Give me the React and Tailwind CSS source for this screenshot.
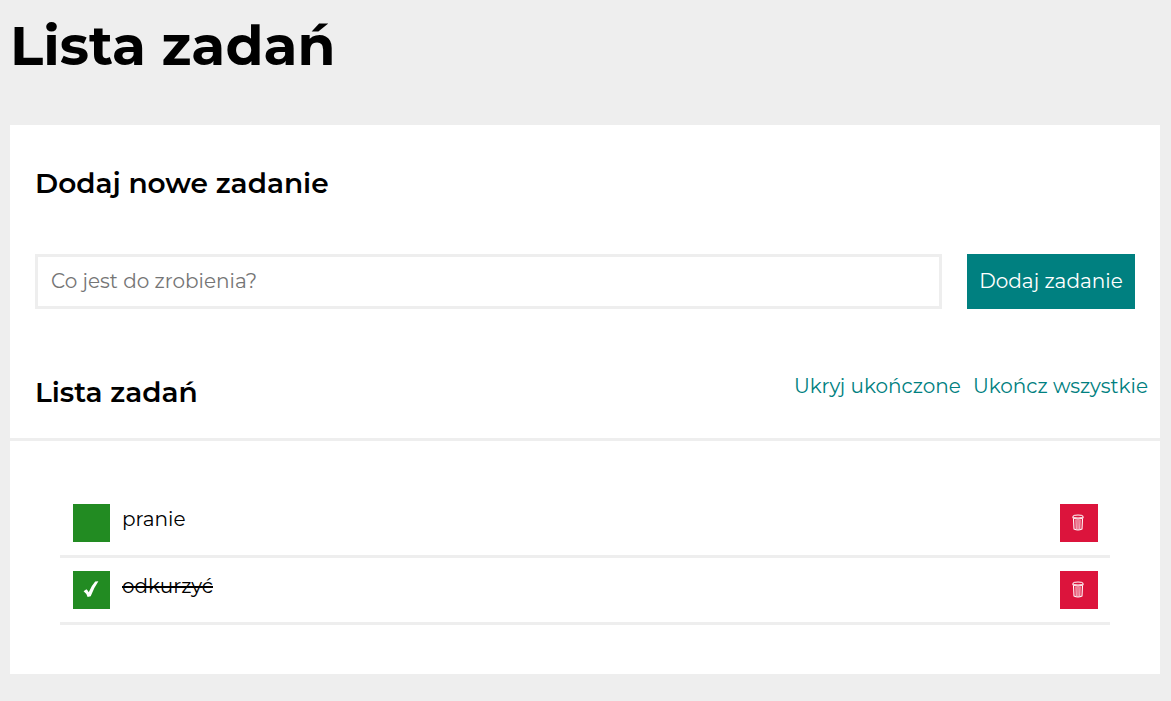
import { useState } from "react";

function TrashIcon() {
  return (
    <svg viewBox="0 0 12 17" className="h-[17px] w-3" fill="none" stroke="#fff" aria-hidden="true">
      <ellipse cx="6" cy="2.500" rx="5.200" ry="1.500" strokeWidth="1" />
      <path d="M0.900 2.500V4.200Q6 5.800 11.100 4.200V2.500" strokeWidth="0.9" />
      <path d="M1.500 4.600 2 15Q6 17 10 15L10.500 4.600" strokeWidth="1.1" />
      <path d="M4 5.500 4.200 15.300M6 5.500V15.800M8 5.500 7.800 15.300" strokeWidth="0.9" />
    </svg>
  );
}

function CheckIcon() {
  return (
    <svg viewBox="0 0 16 18" className="h-[18px] w-4" fill="#fff" aria-hidden="true">
      <path d="M0.600 11.200 3.400 9.200Q4.800 10.200 5.700 12.200Q8.600 5.600 12.200 1.600L15.400 1.200Q10.800 7.800 7.700 16.200L4.600 17Q3.300 13 0.600 11.200Z" />
    </svg>
  );
}

export default function App() {
  const [tasks, setTasks] = useState([
    { id: 1, name: "pranie", done: false },
    { id: 2, name: "odkurzyć", done: true },
  ]);
  const [text, setText] = useState("");
  const [hideDone, setHideDone] = useState(false);

  const addTask = (event) => {
    event.preventDefault();
    if (!text.trim()) return;
    setTasks([...tasks, { id: Date.now(), name: text.trim(), done: false }]);
    setText("");
  };
  const toggle = (id) => setTasks(tasks.map((t) => (t.id === id ? { ...t, done: !t.done } : t)));

  return (
    <div className="min-h-screen bg-[#eeeeee] pr-[11px] pb-[26px] pl-[10px] font-['Montserrat','Inter',sans-serif] text-[20px] leading-6 text-black">
      <h1 className="pt-3 text-[55px] leading-[68px] font-bold">Lista zadań</h1>
      <main className="mt-[45px] bg-white">
        <section className="px-[25px] pt-[42px]">
          <h2 className="text-[28px] leading-8 font-semibold">Dodaj nowe zadanie</h2>
          <form onSubmit={addTask} className="mt-[55px] flex gap-[25px]">
            <input
              aria-label="Nowe zadanie"
              placeholder="Co jest do zrobienia?"
              value={text}
              onChange={(event) => setText(event.target.value)}
              className="h-[55px] min-w-0 flex-1 border-3 border-[#eeeeee] px-[13px] pb-[2px] outline-none placeholder:text-[#757575]"
            />
            <button className="h-[55px] w-[168px] bg-[#008080] pb-[2px] text-white">Dodaj zadanie</button>
          </form>
        </section>
        <section className="mt-[67px]">
          <header className="flex items-start justify-between border-b-3 border-[#eeeeee] pr-3 pb-[30px] pl-[25px]">
            <h2 className="text-[28px] leading-8 font-semibold">Lista zadań</h2>
            <div className="flex gap-3 leading-5 text-[#008080]">
              <button type="button" onClick={() => setHideDone(!hideDone)}>
                {hideDone ? "Pokaż ukończone" : "Ukryj ukończone"}
              </button>
              <button type="button" onClick={() => setTasks(tasks.map((t) => ({ ...t, done: true })))}>
                Ukończ wszystkie
              </button>
            </div>
          </header>
          <ul className="px-[50px] pt-[50px] pb-[49px]">
            {tasks
              .filter((t) => !hideDone || !t.done)
              .map((t) => (
                <li key={t.id} className="flex items-start gap-3 border-b-3 border-[#eeeeee] py-[13px] pr-3 pl-[13px]">
                  <button
                    type="button"
                    aria-label={`Ukończ: ${t.name}`}
                    onClick={() => toggle(t.id)}
                    className="flex h-[38px] w-[37px] items-center justify-center bg-[#228b22] pr-px pb-[2px]"
                  >
                    {t.done && <CheckIcon />}
                  </button>
                  <span className={t.done ? "flex-1 pt-[3px] line-through decoration-2" : "flex-1 pt-[3px]"}>
                    {t.name}
                  </span>
                  <button
                    type="button"
                    aria-label={`Usuń: ${t.name}`}
                    onClick={() => setTasks(tasks.filter((other) => other.id !== t.id))}
                    className="flex size-[38px] items-center justify-center bg-[#dc143c] pr-[2px] pb-px"
                  >
                    <TrashIcon />
                  </button>
                </li>
              ))}
          </ul>
        </section>
      </main>
    </div>
  );
}
